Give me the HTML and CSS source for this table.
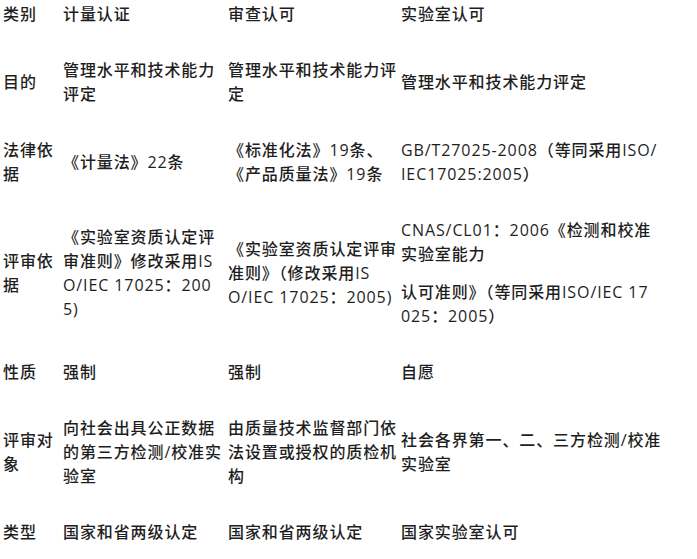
FILE: index.html
```html
<!DOCTYPE html>
<html lang="zh-CN">
<head>
<meta charset="utf-8">
<title>认证认可对比</title>
<link rel="stylesheet" href="styles.css">
</head>
<body>
<table class="cmp">
  <colgroup>
    <col class="c1"><col class="c2"><col class="c3"><col class="c4">
  </colgroup>
  <tr>
    <td>类别</td><td>计量认证</td><td>审查认可</td><td>实验室认可</td>
  </tr>
  <tr>
    <td>目的</td><td>管理水平和技术能力评定</td><td>管理水平和技术能力评定</td><td>管理水平和技术能力评定</td>
  </tr>
  <tr>
    <td>法律依据</td><td>《计量法》22条</td><td>《标准化法》19条、《产品质量法》19条</td><td>GB/T27025-2008（等同采用ISO/<br>IEC17025:2005）</td>
  </tr>
  <tr>
    <td>评审依据</td>
    <td>《实验室资质认定评审准则》修改采用ISO/IEC 17025：2005)</td>
    <td>《实验室资质认定评审准则》（修改采用IS<br>O/IEC 17025：2005)</td>
    <td><div class="para">CNAS/CL01：2006《检测和校准实验室能力</div><div class="para">认可准则》（等同采用ISO/IEC 17<br>025：2005）</div></td>
  </tr>
  <tr>
    <td>性质</td><td>强制</td><td>强制</td><td>自愿</td>
  </tr>
  <tr>
    <td>评审对象</td><td>向社会出具公正数据的第三方检测/校准实验室</td><td>由质量技术监督部门依法设置或授权的质检机构</td><td>社会各界第一、二、三方检测/校准实验室</td>
  </tr>
  <tr>
    <td>类型</td><td>国家和省两级认定</td><td>国家和省两级认定</td><td>国家实验室认可</td>
  </tr>
</table>
</body>
</html>
```

FILE: styles.css
```css
html, body {
  margin: 0;
  padding: 0;
  background: #ffffff;
}
body {
  font-family: "Open Sans", "Noto Sans CJK SC", sans-serif;
  font-size: 16px;
  font-weight: 500;
  color: #1e1e1e;
}
.cmp {
  border-collapse: collapse;
  table-layout: fixed;
  width: 672px;
}
.c1 { width: 60px; }
.c2 { width: 165px; }
.c3 { width: 173px; }
.c4 { width: 274px; }
.cmp td {
  padding: 16px 0 16px 3px;
  line-height: 24px;
  vertical-align: middle;
  word-break: break-all;
  letter-spacing: 0.9px;
}
.cmp td:last-child {
  padding-right: 5px;
}
.cmp tr:first-child td {
  padding-top: 2px;
}
.para + .para {
  margin-top: 14px;
}
```
